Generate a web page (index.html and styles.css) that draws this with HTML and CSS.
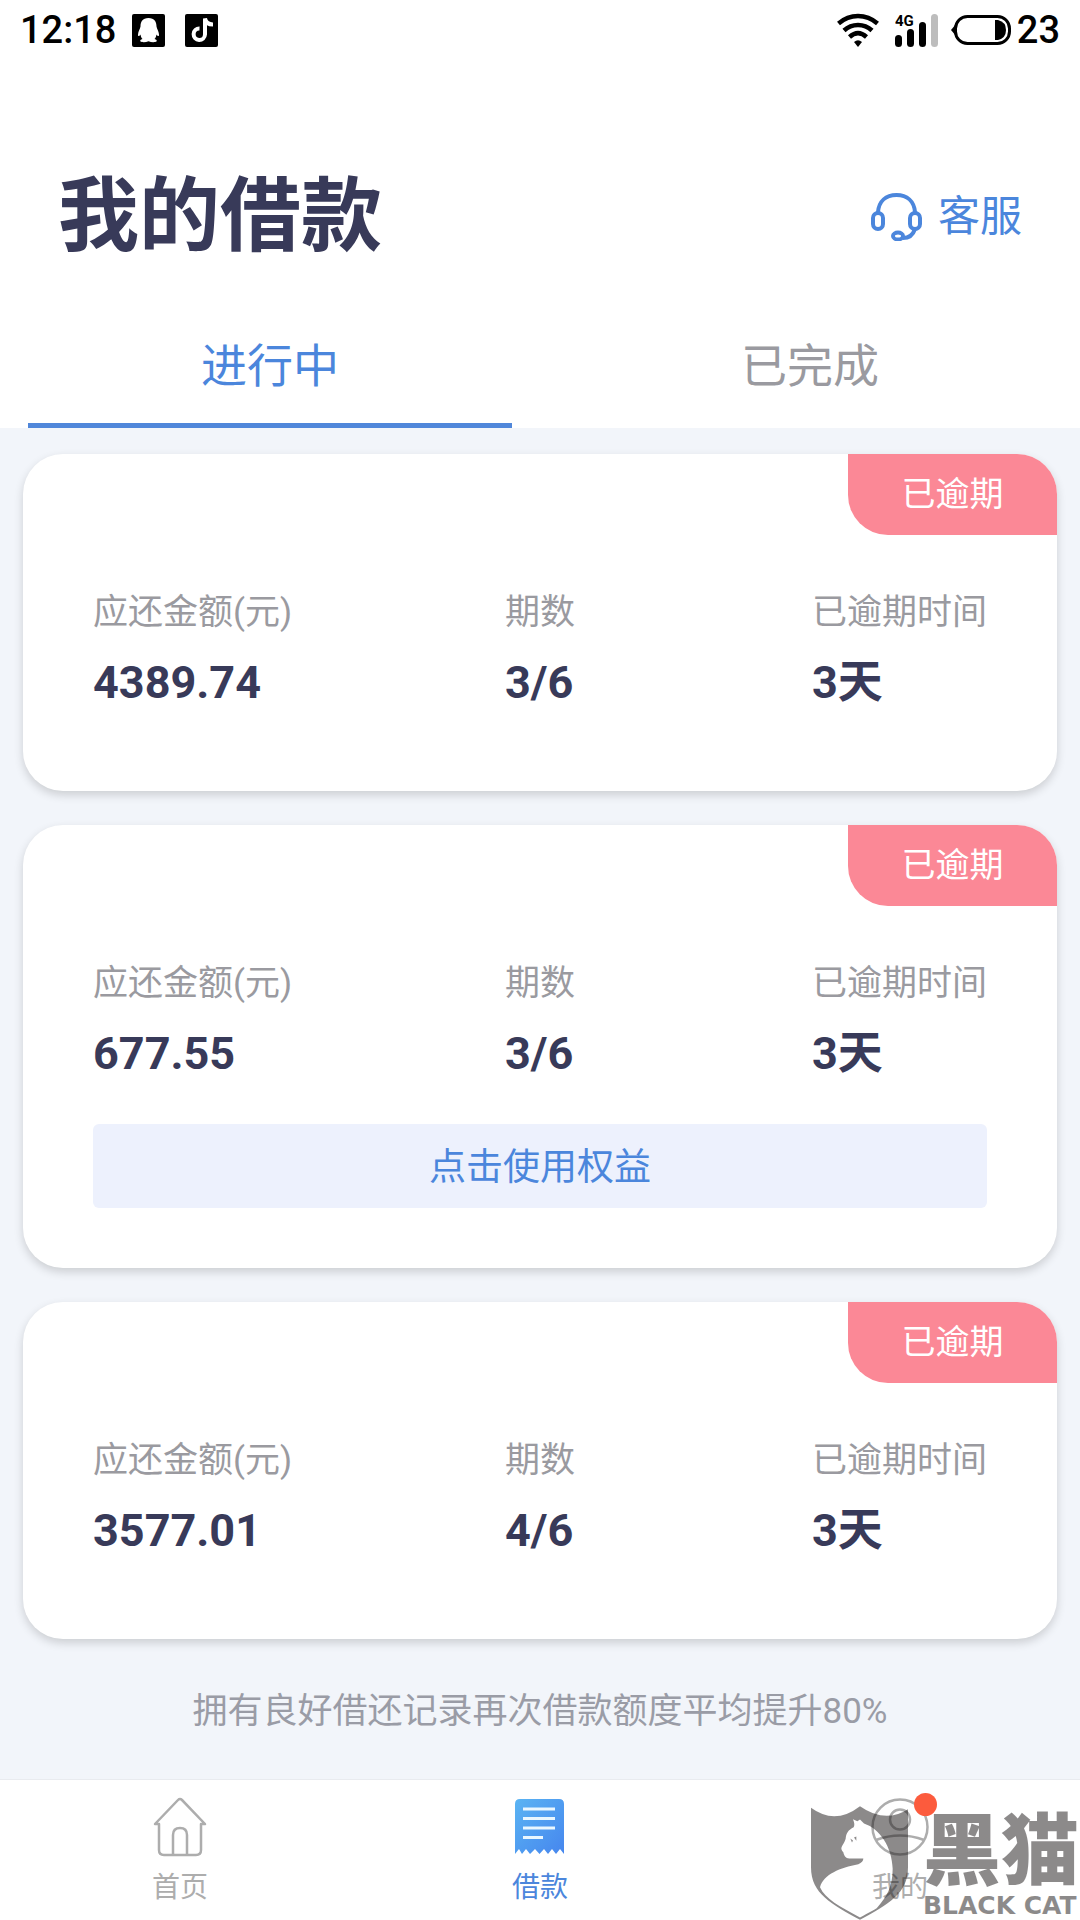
FILE: index.html
```html
<!DOCTYPE html>
<html lang="zh-CN">
<head>
<meta charset="utf-8">
<meta name="viewport" content="width=device-width, initial-scale=1">
<title>我的借款</title>
<link rel="stylesheet" href="styles.css">
</head>
<body>
<div class="status-bar">
  <div class="status-group status-left">
    <span class="status-text">12:18</span>
    <svg class="app-icon" viewBox="0 0 33 33" aria-hidden="true"><rect width="33" height="33" rx="2"/><path fill="#fff" d="M16.500 4C10.500 4 8.500 8 8.500 12.500C8 15 6.200 17.500 6 20.500C5.900 22.500 7 22.500 8.500 20.500C8.800 22.500 9.500 24 10.500 25C8.500 25.500 7.800 26.500 8.500 27.500C10 28.500 14 28.300 16.500 27.300C19 28.300 23 28.500 24.500 27.500C25.200 26.500 24.500 25.500 22.500 25C23.500 24 24.200 22.500 24.500 20.500C26 22.500 27.100 22.500 27 20.500C26.800 17.500 25 15 24.500 12.500C24.500 8 22.500 4 16.500 4Z"/></svg>
    <svg class="app-icon" viewBox="0 0 33 33" aria-hidden="true"><rect width="33" height="33" rx="2"/><path fill="none" stroke="#fff" stroke-width="4" d="M14.500 14.500A5.700 5.700 0 1 0 20 20.500V4.500C20.800 8.500 23.500 10.500 28 10.500"/></svg>
  </div>
  <div class="status-group status-right">
    <svg class="wifi-icon" viewBox="0 0 42 34" aria-hidden="true"><g fill="none" stroke="#000" stroke-width="4.500"><path d="M1.500 10.500C13 .500 29 .500 40.500 10.500"/><path d="M7 17.500C15 10 27 10 35 17.500"/><path d="M12.500 24C18 19 24 19 29.500 24"/></g><path d="M17 29Q21 25.500 25 29L21 34Z"/></svg>
    <svg class="signal-icon" viewBox="0 0 44 34" aria-hidden="true"><text class="signal-label" x="0" y="13">4G</text><rect x="0" y="22" width="7" height="12" rx="3.500"/><rect x="12" y="16" width="7" height="18" rx="3.500"/><rect x="24" y="9" width="7" height="25" rx="3.500"/><rect x="36" y="1" width="7" height="33" rx="3.500" fill="#bdbdbd"/></svg>
    <svg class="battery-icon" viewBox="0 0 60 30" aria-hidden="true"><path d="M5 9L0 15L5 21Z"/><rect x="4.500" y="1.500" width="54" height="27" rx="12" fill="none" stroke="#000" stroke-width="3"/><path d="M44 5H47Q55 7 55 15T47 25H44Z"/></svg>
    <span class="status-text">23</span>
  </div>
</div>

<header class="header">
  <h1 class="title">我的借款</h1>
  <a class="service" href="#service">
    <svg class="service-icon" viewBox="0 0 51 48" fill="none" stroke="#4b86dc" stroke-width="4" aria-hidden="true"><path d="M7 20V19C8 8 15 2 25.500 2S43 8 44 19V20"/><rect x="2" y="20" width="10" height="16" rx="5"/><rect x="39" y="20" width="10" height="16" rx="5"/><path d="M44 36C42 42 38 45 32 45"/><ellipse cx="27" cy="43" rx="5" ry="3.500"/></svg>
    <span>客服</span>
  </a>
</header>

<nav class="tabs">
  <button class="tab tab-active" type="button">进行中</button>
  <button class="tab" type="button">已完成</button>
</nav>

<main class="loans">
  <article class="card">
    <span class="badge">已逾期</span>
    <dl class="facts">
      <div><dt>应还金额(元)</dt><dd>4389.74</dd></div>
      <div><dt>期数</dt><dd>3/6</dd></div>
      <div><dt>已逾期时间</dt><dd>3天</dd></div>
    </dl>
  </article>
  <article class="card card-benefit">
    <span class="badge">已逾期</span>
    <dl class="facts">
      <div><dt>应还金额(元)</dt><dd>677.55</dd></div>
      <div><dt>期数</dt><dd>3/6</dd></div>
      <div><dt>已逾期时间</dt><dd>3天</dd></div>
    </dl>
    <button class="benefit" type="button">点击使用权益</button>
  </article>
  <article class="card">
    <span class="badge">已逾期</span>
    <dl class="facts">
      <div><dt>应还金额(元)</dt><dd>3577.01</dd></div>
      <div><dt>期数</dt><dd>4/6</dd></div>
      <div><dt>已逾期时间</dt><dd>3天</dd></div>
    </dl>
  </article>
  <p class="hint">拥有良好借还记录再次借款额度平均提升80%</p>
</main>

<footer class="bottom">
  <nav class="bottom-nav">
    <a class="nav-item" href="#home">
      <svg class="nav-icon" viewBox="0 0 60 60" fill="none" stroke="#adadad" stroke-width="2.500" stroke-linejoin="round" aria-hidden="true"><path d="M5 27L28 3Q30 1 32 3L55 27H51V53Q51 58 46 58H14Q9 58 9 53V27Z"/><path d="M23 58V38Q23 31 30 31T37 38V58"/></svg>
      <span>首页</span>
    </a>
    <a class="nav-item nav-active" href="#loans">
      <svg class="nav-icon" viewBox="0 0 60 60" aria-hidden="true"><defs><linearGradient id="receipt" x1="0" y1="0" x2="1" y2="1"><stop offset="0" stop-color="#5ab4f3"/><stop offset="1" stop-color="#4686ee"/></linearGradient></defs><path fill="url(#receipt)" d="M5 57V7Q5 2 10 2H49Q54 2 54 7V57L50 52L46 57L42 52L38 57L34 52L29.500 57L25 52L20 57L16 52L12 57L9 52Z"/><path fill="none" stroke="#e9f7ff" stroke-width="3" d="M13 12H45M13 21.500H45M13 31H45M13 40.500H33"/></svg>
      <span>借款</span>
    </a>
    <a class="nav-item" href="#mine">
      <span class="nav-icon-wrap">
        <svg class="nav-icon" viewBox="0 0 60 60" fill="none" stroke="#adadad" stroke-width="2.500" aria-hidden="true"><circle cx="30" cy="30" r="27.500"/><circle cx="30" cy="22.500" r="10"/><path d="M6 43Q30 34 54 43"/></svg>
        <span class="dot"></span>
      </span>
      <span>我的</span>
    </a>
  </nav>
  <div class="watermark">
    <svg class="shield" viewBox="93 137 291 341" aria-hidden="true"><path fill="#1b1718" fill-rule="evenodd" d="M93 142Q165 195 240 137Q315 190 384 146V320C384 400 325 430 240 478C155 430 93 400 93 320ZM219 176C224 188 224 194 221 200C205 208 198 218 197 235C192 250 186 255 184 264C185 270 187 272 190 275C193 290 200 294 212 294H250C250 302 245 307 235 311C180 322 132 340 120 380C135 415 180 438 240 471C250 465 275 452 290 443C320 410 338 380 338 325C336 260 300 205 252 189L240 177L232 182Z"/><path fill="#1b1718" d="M211 234L219 240L216 246ZM222 231L229 228V241Z"/></svg>
    <div class="watermark-text">
      <span class="watermark-cn">黑猫</span>
      <span class="watermark-en">BLACK CAT</span>
    </div>
  </div>
</footer>
</body>
</html>
```
FILE: styles.css
```css
* {
  box-sizing: border-box;
}

body {
  display: flex;
  flex-direction: column;
  min-height: 100vh;
  margin: 0;
  background: #fff;
  color: #383a59;
  font-family: Roboto, "Noto Sans CJK SC", sans-serif;
}

button {
  padding: 0;
  border: 0;
  background: none;
  font: inherit;
  cursor: pointer;
}

a {
  color: inherit;
  text-decoration: none;
}

.status-bar {
  display: flex;
  justify-content: space-between;
  align-items: center;
  height: 60px;
  padding: 0 20px;
  color: #000;
}

.status-group {
  display: flex;
  align-items: center;
}

.status-left {
  gap: 16px;
}

.status-left .app-icon + .app-icon {
  margin-left: 4px;
}

.status-right {
  gap: 12px;
}

.status-text {
  font-size: 38px;
  font-weight: 500;
  line-height: 60px;
}

.status-right .status-text {
  margin-left: -6px;
}

.app-icon {
  width: 33px;
  height: 33px;
}

.wifi-icon {
  width: 42px;
  height: 34px;
  margin-right: 4px;
}

.signal-icon {
  width: 44px;
  height: 34px;
}

.signal-label {
  font-size: 15px;
  font-weight: 700;
}

.battery-icon {
  width: 60px;
  height: 30px;
}

.header {
  display: flex;
  justify-content: space-between;
  align-items: center;
  padding: 107px 58px 0;
}

.title {
  margin: 0;
  font-size: 81px;
  font-weight: 700;
  line-height: 100px;
}

.service {
  display: flex;
  align-items: center;
  gap: 16px;
  color: #4b86dc;
  font-size: 42px;
  line-height: 60px;
}

.service-icon {
  width: 51px;
  height: 48px;
}

.tabs {
  display: grid;
  grid-template-columns: 1fr 1fr;
  gap: 56px;
  padding: 28px 28px 0;
}

.tab {
  height: 133px;
  border-top: 5px solid transparent;
  border-bottom: 5px solid transparent;
  color: #9a9aa0;
  font-size: 46px;
}

.tab-active {
  border-bottom-color: #5087da;
  color: #4b86dc;
}

.loans {
  display: flex;
  flex: 1;
  flex-direction: column;
  gap: 34px;
  padding: 26px 23px 0;
  background: #f2f5fa;
}

.card {
  position: relative;
  padding: 135px 70px 78px;
  border-radius: 40px;
  background: #fff;
  box-shadow: 0 4px 10px rgba(0, 0, 0, 0.16);
}

.card-benefit {
  padding-bottom: 60px;
}

.badge {
  position: absolute;
  top: 0;
  right: 0;
  width: 209px;
  border-radius: 0 40px 0 40px;
  background: #fb8896;
  color: #fff;
  font-size: 34px;
  line-height: 81px;
  text-align: center;
}

.facts {
  display: grid;
  grid-template-columns: 1fr auto 1fr;
  margin: 0;
}

.facts > :last-child {
  justify-self: end;
}

.facts dt {
  margin-bottom: 16px;
  color: #9a9aa0;
  font-size: 35px;
  line-height: 48px;
}

.facts dd {
  margin: 0;
  font-size: 45px;
  font-weight: 700;
  line-height: 60px;
}

.benefit {
  display: block;
  width: 100%;
  height: 84px;
  margin-top: 40px;
  padding-bottom: 4px;
  border-radius: 6px;
  background: #edf1fd;
  color: #4b86dc;
  font-size: 37px;
}

.hint {
  margin: 13px 0 41px;
  color: #9a9ca6;
  font-size: 35px;
  line-height: 52px;
  text-align: center;
}

.bottom {
  position: relative;
  border-top: 1px solid #e9ebef;
  background: #fff;
}

.bottom-nav {
  display: grid;
  grid-template-columns: 1fr 1fr 1fr;
  height: 140px;
}

.nav-item {
  display: flex;
  flex-direction: column;
  align-items: center;
  gap: 11px;
  padding-top: 17px;
  color: #adadad;
  font-size: 28px;
  line-height: 40px;
}

.nav-active {
  color: #4b86dc;
}

.nav-icon {
  display: block;
  width: 60px;
  height: 60px;
}

.nav-icon-wrap {
  position: relative;
}

.dot {
  position: absolute;
  top: -4px;
  right: -7px;
  width: 23px;
  height: 23px;
  border-radius: 50%;
  background: #fc5b3d;
}

.watermark {
  position: absolute;
  right: 1px;
  bottom: 0;
  display: flex;
  align-items: flex-end;
  gap: 15px;
  color: #1b1718;
  opacity: 0.5;
  pointer-events: none;
}

.shield {
  width: 97px;
  height: 114px;
}

.watermark-text {
  display: flex;
  flex-direction: column;
}

.watermark-cn {
  font-size: 78px;
  font-weight: 900;
  line-height: 78px;
}

.watermark-en {
  font-family: "DejaVu Sans", sans-serif;
  font-size: 25px;
  font-weight: 700;
  line-height: 28px;
}
```
